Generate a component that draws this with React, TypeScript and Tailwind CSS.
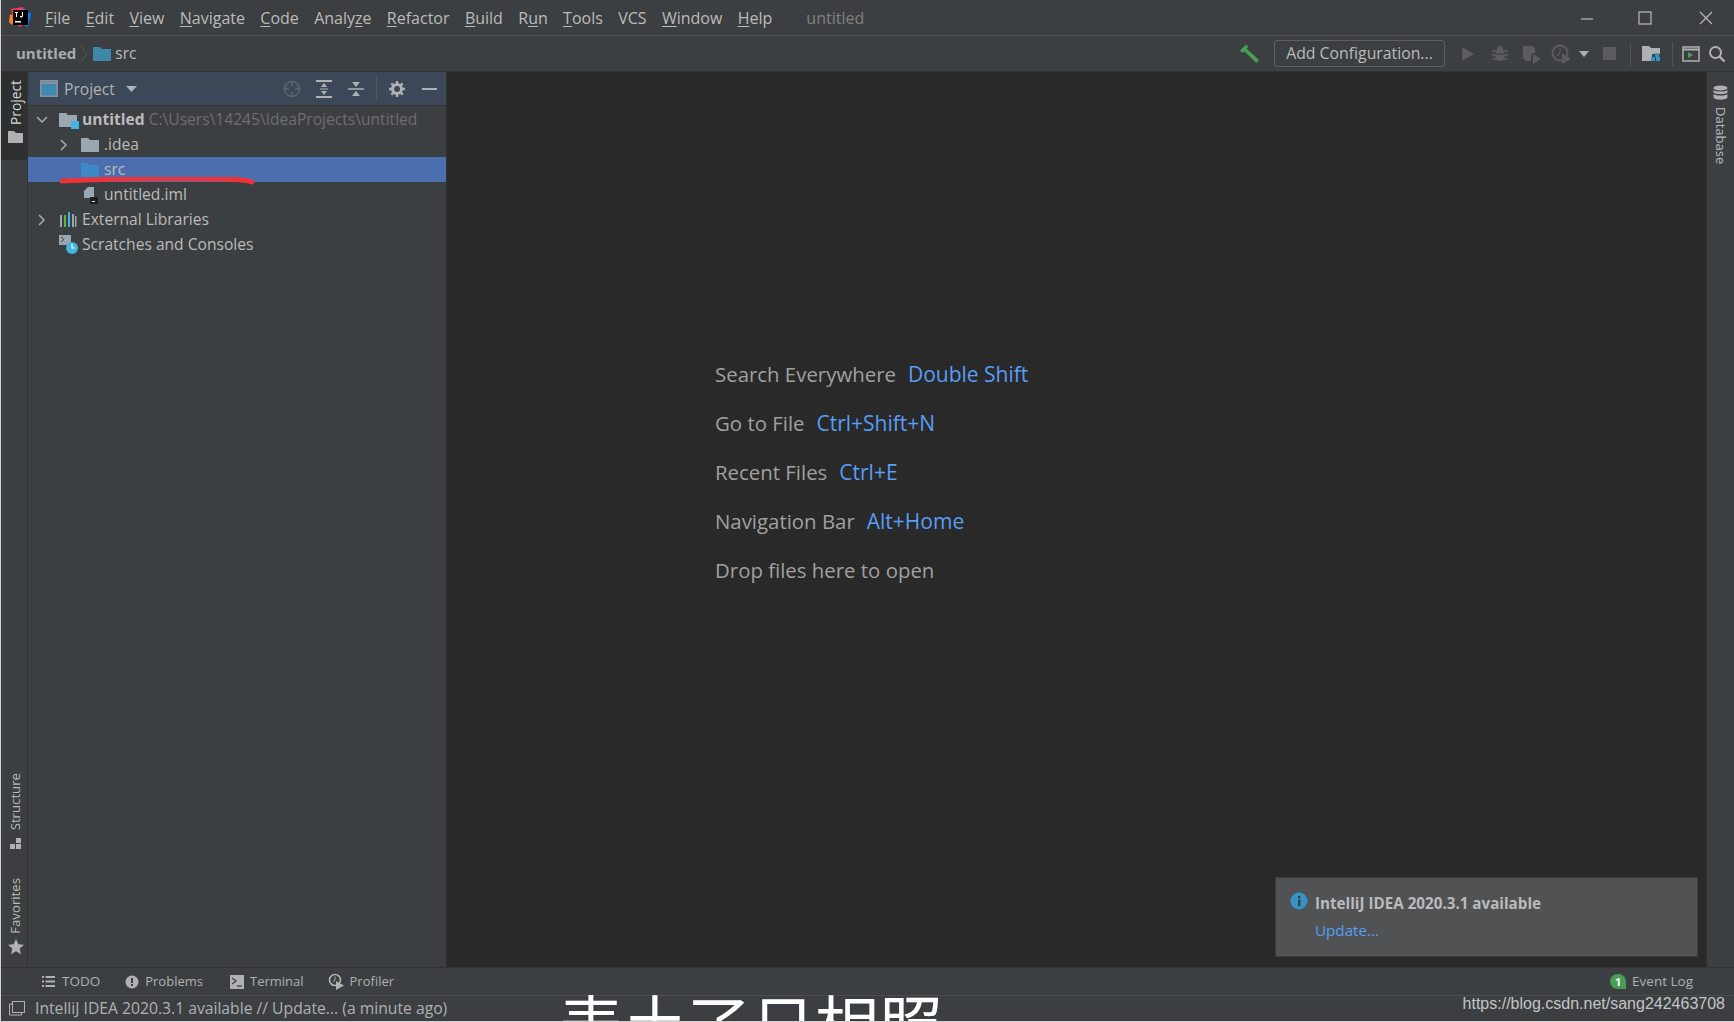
import React from "react";

const Menu = ({ a = "", u = "", b = "" }: { a?: string; u?: string; b?: string }) => (
  <span>
    {a}
    <span className="underline underline-offset-2">{u}</span>
    {b}
  </span>
);

const Folder = ({ color = "#9aa7b0", className = "" }: { color?: string; className?: string }) => (
  <svg width="18" height="15" viewBox="0 0 18 15" className={className}>
    <path d="M0 1h7l2 2h9v12H0z" fill={color} />
  </svg>
);

const Row = ({ indent, chevron, icon, children, selected }: { indent: string; chevron?: "down" | "right"; icon: React.ReactNode; children: React.ReactNode; selected?: boolean }) => (
  <div className={`flex h-[25px] items-center ${indent} ${selected ? "bg-[#4b6eaf]" : ""}`}>
    <span className="flex w-[22px] shrink-0 items-center justify-center">
      {chevron === "down" && (
        <svg width="14" height="10" viewBox="0 0 14 10"><path d="M2 2l5 5 5-5" fill="none" stroke="#a9a9a9" strokeWidth="1.5" /></svg>
      )}
      {chevron === "right" && (
        <svg width="10" height="14" viewBox="0 0 10 14"><path d="M2 2l5 5-5 5" fill="none" stroke="#a9a9a9" strokeWidth="1.5" /></svg>
      )}
    </span>
    <span className="ml-[6px] flex w-[23px] shrink-0 items-center">{icon}</span>
    {children}
  </div>
);

const VText = ({ children, className = "" }: { children: React.ReactNode; className?: string }) => (
  <span className={`[writing-mode:vertical-rl] leading-none text-[#bbbbbb] ${className}`}>{children}</span>
);

const Hint = ({ label, keys }: { label: string; keys?: string }) => (
  <div className="flex h-[49px] shrink-0 items-center gap-[12px] text-[20.4px]">
    <span className="text-[#a0a0a0]">{label}</span>
    {keys && <span className="text-[21px] text-[#589df6]">{keys}</span>}
  </div>
);

export default function App() {
  return (
    <div className="relative flex h-[1022px] w-[1734px] flex-col overflow-hidden border-b border-l border-[#d0d0d0] bg-[#3c3f41] font-['Open_Sans','Noto_Sans_CJK_SC',sans-serif] text-[#bbbbbb]">
      {/* title bar */}
      <div className="flex h-[36px] shrink-0 items-center border-b border-[#4e5052] text-[16px]">
        <svg width="24" height="24" viewBox="0 0 24 24" className="ml-[7px]">
          <path d="M3 3l12-2 3 8-12 9z" fill="#fe315d" />
          <path d="M16 2l7 6-3 13-8-4z" fill="#087cfa" />
          <path d="M2 8l8 4-6 7-3-3z" fill="#fc801d" />
          <path d="M6 17l10-10 4 8-8 6z" fill="#fe2857" />
          <rect x="5" y="4" width="15" height="15" fill="#000" />
          <rect x="7" y="15" width="6" height="1.5" fill="#fff" />
          <path d="M7 6h3v1H9v4H8V7H7zM12 6h3v4a2 2 0 01-3 1v-1h2V6z" fill="#fff" />
        </svg>
        <div className="ml-[13px] flex gap-[15.35px] text-[#bbbbbb]">
          <Menu u="F" b="ile" />
          <Menu u="E" b="dit" />
          <Menu u="V" b="iew" />
          <Menu u="N" b="avigate" />
          <Menu u="C" b="ode" />
          <Menu a="Analy" u="z" b="e" />
          <Menu u="R" b="efactor" />
          <Menu u="B" b="uild" />
          <Menu a="R" u="u" b="n" />
          <Menu u="T" b="ools" />
          <Menu a="VCS" />
          <Menu u="W" b="indow" />
          <Menu u="H" b="elp" />
        </div>
        <span className="ml-[34px] text-[#808080]">untitled</span>
        <div className="ml-auto flex items-center">
          <svg width="59" height="20" viewBox="0 0 59 20"><path d="M24 11h12" stroke="#bbb" strokeWidth="1.2" /></svg>
          <svg width="60" height="14" viewBox="0 0 60 14"><rect x="23" y="1" width="12" height="12" fill="none" stroke="#bbb" strokeWidth="1.2" /></svg>
          <svg width="60" height="14" viewBox="0 0 60 14" className="mr-[-2px]"><path d="M24 1l12 12M36 1L24 13" stroke="#bbb" strokeWidth="1.1" /></svg>
        </div>
      </div>

      {/* nav bar */}
      <div className="flex h-[36px] shrink-0 items-center border-b border-[#323232] pl-[15px] text-[15px]">
        <span className="font-bold text-[#a9adb0]">untitled</span>
        <svg width="12" height="20" viewBox="0 0 12 20" className="ml-[3px]"><path d="M2 2l6 8-6 8" fill="none" stroke="#555" /></svg>
        <Folder color="#3d88a8" className="ml-[2px]" />
        <span className="ml-[4px] text-[15.5px]">src</span>
        <div className="ml-auto flex items-center">
          <svg width="20" height="20" viewBox="0 0 20 20"><path d="M0 6.5L6 0.5l2.5 2.5-2 1.5L19 16l-2.5 3L4.5 7.5 2.5 9z" fill="#499c54" /></svg>
          <div className="ml-[14px] flex h-[27px] w-[171px] items-center justify-center rounded-[3px] border border-[#5e6060] text-[15.8px] text-[#bbbbbb]">Add Configuration...</div>
          <svg width="14" height="16" viewBox="0 0 14 16" className="ml-[16px]"><path d="M1 1l12 7-12 7z" fill="#5a5c5e" /></svg>
          <svg width="18" height="18" viewBox="0 0 18 18" className="ml-[16px]"><ellipse cx="9" cy="10" rx="5" ry="6" fill="#5a5c5e" /><circle cx="9" cy="4" r="3" fill="#5a5c5e" /><path d="M1 6h16M1 10h16M1 14h16" stroke="#5a5c5e" strokeWidth="1.5" /><path d="M4 9h10" stroke="#3c3f41" /></svg>
          <svg width="20" height="20" viewBox="0 0 20 20" className="ml-[13px]"><path d="M1 2h10l2 3v4l-4 1v7H4l-3-3z" fill="#5a5c5e" /><path d="M11 10l8 5-8 5z" fill="#5a5c5e" /></svg>
          <svg width="22" height="20" viewBox="0 0 22 20" className="ml-[9px]"><circle cx="9" cy="9" r="7.5" fill="none" stroke="#5a5c5e" strokeWidth="2" /><path d="M9 4v5l-3 3" fill="none" stroke="#5a5c5e" strokeWidth="1.2" /><path d="M11 9l9 6-9 5z" fill="#5a5c5e" /></svg>
          <svg width="10" height="6" viewBox="0 0 10 6" className="ml-[6px]"><path d="M0 0h10L5 6z" fill="#afb1b3" /></svg>
          <span className="ml-[14px] h-[13px] w-[13px] bg-[#5a5c5e]" />
          <span className="ml-[14px] h-[24px] w-px bg-[#505254]" />
          <svg width="19" height="17" viewBox="0 0 19 17" className="ml-[11px]"><path d="M0 1h7l2 2h9v6h-8v7H0z" fill="#afb1b3" /><path d="M13 8h4v4h-4zM9 12h4v4H9zM14 12h4v4h-4z" fill="#3592c4" /></svg>
          <span className="ml-[11px] h-[24px] w-px bg-[#505254]" />
          <svg width="18" height="16" viewBox="0 0 18 16" className="ml-[9px]"><rect x="1" y="1" width="16" height="14" fill="none" stroke="#afb1b3" strokeWidth="1.5" /><path d="M1 3.5h16" stroke="#afb1b3" strokeWidth="2" /><path d="M6 6l5 3-5 3z" fill="#499c54" /></svg>
          <svg width="18" height="18" viewBox="0 0 18 18" className="ml-[8px] mr-[8px]"><circle cx="7.5" cy="7.5" r="5.5" fill="none" stroke="#afb1b3" strokeWidth="2" /><path d="M11.5 11.5l5 5" stroke="#afb1b3" strokeWidth="2.4" /></svg>
        </div>
      </div>

      {/* main */}
      <div className="flex min-h-0 flex-1">
        {/* left stripe */}
        <div className="flex w-[27px] shrink-0 flex-col border-r border-[#323232]">
          <div className="flex h-[88px] flex-col items-center gap-[6px] bg-[#2d2f30] pl-[3px] pt-[8px]">
            <VText className="rotate-180 text-[13.8px] text-[#d8d8d8]">Project</VText>
            <svg width="15" height="12" viewBox="0 0 15 12"><path d="M0 0h6l2 2h7v10H0z" fill="#afb1b3" /></svg>
          </div>
          <div className="mt-auto flex flex-col items-center pb-[12px] pl-[3px]">
            <VText className="rotate-180 text-[13.2px]">Structure</VText>
            <svg width="13" height="12" viewBox="0 0 13 12" className="mt-[8px]"><path d="M7 0h5v5H7zM1 6h5v5H1zM7 6h5v5H7z" fill="#afb1b3" /></svg>
            <VText className="mt-[28px] rotate-180 text-[13.2px]">Favorites</VText>
            <svg width="16" height="16" viewBox="0 0 16 16" className="mt-[5px]"><path d="M8 0l2.3 5.2 5.7.6-4.3 3.8 1.3 5.6L8 12.2l-5 3 1.3-5.6L0 5.8l5.7-.6z" fill="#afb1b3" /></svg>
          </div>
        </div>

        {/* project panel */}
        <div className="flex w-[419px] shrink-0 flex-col border-r border-[#323232] text-[15.6px]">
          <div className="flex h-[34px] shrink-0 items-center border-b border-[#323232] bg-[#3c4858] pl-[12px]">
            <svg width="18" height="17" viewBox="0 0 18 17"><rect x="0.75" y="0.75" width="16.5" height="15.5" fill="#3d8bb0" stroke="#8a9199" strokeWidth="1.5" /><path d="M1 3h16" stroke="#8a9199" strokeWidth="2" /></svg>
            <span className="ml-[6px] pt-[2px] text-[#afb1b3]">Project</span>
            <svg width="11" height="6" viewBox="0 0 11 6" className="ml-[11px]"><path d="M0 0h11L5.5 6z" fill="#afb1b3" /></svg>
            <div className="ml-auto flex items-center">
              <svg width="18" height="18" viewBox="0 0 18 18"><circle cx="9" cy="9" r="7.5" fill="none" stroke="#5f6568" strokeWidth="1.6" /><path d="M9 1v5M9 12v5M1 9h5M12 9h5" stroke="#5f6568" strokeWidth="1.6" /></svg>
              <svg width="16" height="18" viewBox="0 0 16 18" className="ml-[15px]"><path d="M0 1h16M0 17h16" stroke="#afb1b3" strokeWidth="2" /><path d="M8 3l3 4H5zM8 15l3-4H5z" fill="#afb1b3" /><path d="M4 9h8" stroke="#afb1b3" /></svg>
              <svg width="16" height="16" viewBox="0 0 16 16" className="ml-[16px]"><path d="M0 8h16" stroke="#afb1b3" strokeWidth="1.5" /><path d="M8 6L4 1h8zM8 10l4 5H4z" fill="#afb1b3" /></svg>
              <span className="ml-[12px] h-[24px] w-px bg-[#4f5a66]" />
              <svg width="16" height="16" viewBox="0 0 16 16" className="ml-[12px]"><circle cx="8" cy="8" r="4.5" fill="none" stroke="#afb1b3" strokeWidth="3" /><path d="M8 0v3M8 13v3M0 8h3M13 8h3M2.3 2.3l2 2M11.7 11.7l2 2M2.3 13.7l2-2M11.7 4.3l2-2" stroke="#afb1b3" strokeWidth="2.4" /></svg>
              <span className="ml-[17px] mr-[9px] h-[2px] w-[15px] bg-[#afb1b3]" />
            </div>
          </div>
          <div className="relative flex flex-col pt-px">
            <Row
              indent="pl-[3px]"
              chevron="down"
              icon={
                <span className="relative flex">
                  <Folder color="#9aa7b0" />
                  <span className="absolute bottom-[-2px] right-[-2px] h-[8px] w-[8px] bg-[#40b6e0]" />
                </span>
              }
            >
              <span className="font-bold text-[#bbbbbb]">untitled</span>
              <span className="ml-[4px] text-[#6e6e6e]">C:\Users\14245\IdeaProjects\untitled</span>
            </Row>
            <Row indent="pl-[25px]" chevron="right" icon={<Folder />}>
              <span>.idea</span>
            </Row>
            <Row indent="pl-[25px]" selected icon={<Folder color="#3d88c4" />}>
              <span>src</span>
            </Row>
            <Row
              indent="pl-[25px]"
              icon={
                <svg width="18" height="18" viewBox="0 0 18 18"><path d="M3 5l4-4h6v11H3z" fill="#9aa7b0" /><rect x="9" y="11" width="8" height="7" fill="#1e1e1e" /><path d="M11 15.5h3" stroke="#ddd" /></svg>
              }
            >
              <span>untitled.iml</span>
            </Row>
            <Row
              indent="pl-[3px]"
              chevron="right"
              icon={
                <svg width="18" height="15" viewBox="0 0 18 15"><path d="M1 3h2v12H1z" fill="#9aa7b0" /><path d="M5 3h2v12H5z" fill="#62b543" /><path d="M9 0h2v15H9z" fill="#40b6e0" /><path d="M13 2h2v13h-2z" fill="#9aa7b0" /><path d="M16 4h1.5v11H16z" fill="#9aa7b0" /></svg>
              }
            >
              <span>External Libraries</span>
            </Row>
            <Row
              indent="pl-[3px]"
              icon={
                <svg width="19" height="19" viewBox="0 0 19 19"><rect x="0" y="0" width="12" height="10" fill="#9aa7b0" /><path d="M2 2l3 2.5L2 7" fill="none" stroke="#3c3f41" /><circle cx="13" cy="13" r="6" fill="#40b6e0" /><path d="M13 9v4h3" fill="none" stroke="#fff" strokeWidth="1.2" /></svg>
              }
            >
              <span>Scratches and Consoles</span>
            </Row>
            {/* red annotation */}
            <svg width="200" height="10" viewBox="0 0 200 10" className="absolute left-[32px] top-[71px]">
              <path d="M2 4C50 2 110 1 160 2c12 0 26 1 32 3" fill="none" stroke="#ee3338" strokeWidth="5" strokeLinecap="round" />
            </svg>
          </div>
        </div>

        {/* editor */}
        <div className="relative flex min-w-0 flex-1 flex-col bg-[#292929] pl-[268px] pt-[278px]">
          <Hint label="Search Everywhere" keys="Double Shift" />
          <Hint label="Go to File" keys="Ctrl+Shift+N" />
          <Hint label="Recent Files" keys="Ctrl+E" />
          <Hint label="Navigation Bar" keys="Alt+Home" />
          <Hint label="Drop files here to open" />
          <div className="absolute bottom-[10px] right-[8px] flex h-[80px] w-[423px] flex-col border border-[#393b3d] bg-[#505254] pl-[39px] pt-[14px] text-[15.2px]">
            <svg width="18" height="18" viewBox="0 0 18 18" className="absolute left-[14px] top-[14px]"><circle cx="9" cy="9" r="8.5" fill="#3592c4" /><rect x="8" y="7.5" width="2.4" height="6.5" fill="#3c3f41" /><rect x="8" y="4" width="2.4" height="2.4" fill="#3c3f41" /></svg>
            <span className="font-bold text-[#bbbbbb]">IntelliJ IDEA 2020.3.1 available</span>
            <span className="mt-[4px] text-[#589df6]">Update...</span>
          </div>
        </div>

        {/* right stripe */}
        <div className="flex w-[28px] shrink-0 flex-col items-center border-l border-[#323232] pt-[13px]">
          <svg width="15" height="16" viewBox="0 0 15 16"><ellipse cx="7.5" cy="3" rx="7" ry="2.6" fill="#afb1b3" /><path d="M0.5 5c2 2 12 2 14 0v2.5c-2 2-12 2-14 0zM0.5 9c2 2 12 2 14 0v3.5c-2 3-12 3-14 0z" fill="#afb1b3" /></svg>
          <VText className="mt-[6px] text-[13px]">Database</VText>
        </div>
      </div>

      {/* tool window bar */}
      <div className="flex h-[29px] shrink-0 items-center border-y border-[#323232] border-b-[#4b4d4f] text-[13px] text-[#afb1b3]">
        <div className="ml-[41px] flex items-center gap-[7px]">
          <svg width="13" height="11" viewBox="0 0 13 11"><path d="M0 0h2v2H0zM0 4.5h2v2H0zM0 9h2v2H0zM3.5 0H13v2H3.5zM3.5 4.5H13v2H3.5zM3.5 9H13v2H3.5z" fill="#afb1b3" /></svg>
          <span className="text-[13.5px]">TODO</span>
        </div>
        <div className="ml-[25px] flex items-center gap-[6px]">
          <svg width="14" height="14" viewBox="0 0 14 14"><circle cx="7" cy="7" r="6.5" fill="#afb1b3" /><rect x="6" y="3" width="2" height="5" fill="#3c3f41" /><rect x="6" y="9" width="2" height="2" fill="#3c3f41" /></svg>
          <span>Problems</span>
        </div>
        <div className="ml-[27px] flex items-center gap-[6px]">
          <svg width="14" height="14" viewBox="0 0 14 14"><rect width="14" height="14" fill="#afb1b3" /><path d="M2 3l4 3-4 3" fill="none" stroke="#3c3f41" strokeWidth="1.3" /><path d="M7 11h5" stroke="#3c3f41" strokeWidth="1.3" /></svg>
          <span>Terminal</span>
        </div>
        <div className="ml-[24px] flex items-center gap-[5px]">
          <svg width="17" height="17" viewBox="0 0 17 17"><circle cx="7" cy="7" r="5.5" fill="none" stroke="#afb1b3" strokeWidth="1.6" /><path d="M7 3.5V7L5 9" fill="none" stroke="#afb1b3" /><path d="M8 8l8 4.5L8 17z" fill="#afb1b3" /></svg>
          <span>Profiler</span>
        </div>
        <div className="ml-auto mr-[41px] flex items-center gap-[6px]">
          <span className="flex h-[15px] w-[16px] items-center justify-center rounded-[8px] rounded-br-none bg-[#499c54] text-[11px] font-bold leading-none text-white">1</span>
          <span className="text-[13.5px]">Event Log</span>
        </div>
      </div>

      {/* status bar */}
      <div className="flex h-[25px] shrink-0 items-center text-[15.7px] text-[#afb1b3]">
        <svg width="16" height="15" viewBox="0 0 16 15" className="ml-[8px]"><rect x="3.5" y="0.5" width="12" height="11" fill="none" stroke="#afb1b3" /><path d="M3 3H0.5v11h12v-2" fill="none" stroke="#afb1b3" /></svg>
        <span className="ml-[10px]">IntelliJ IDEA 2020.3.1 available // Update... (a minute ago)</span>
      </div>

      {/* watermark and subtitle burned into the picture */}
      <span className="absolute bottom-[9px] right-[9px] font-['Liberation_Sans'] text-[16px] leading-none text-[#c4c4c4]">https://blog.csdn.net/sang242463708</span>
      <span className="absolute left-[558px] top-[989px] font-['Noto_Sans_CJK_SC'] text-[64px] leading-none text-white">表土了日相照</span>
    </div>
  );
}
